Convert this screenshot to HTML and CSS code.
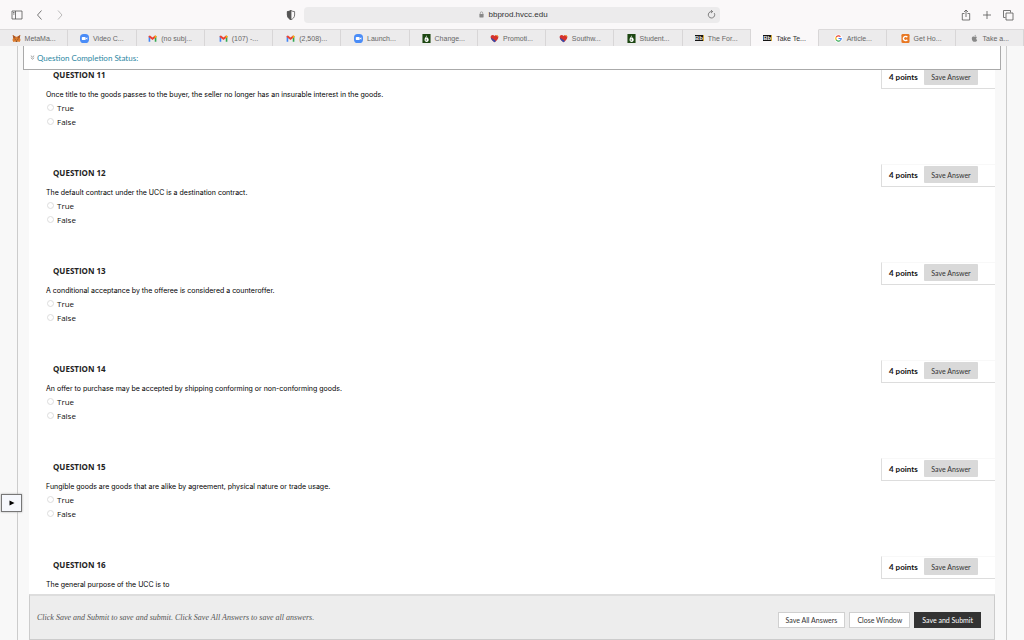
FILE: index.html
```html
<!DOCTYPE html>
<html lang="en">

<head>
    <meta charset="UTF-8">
    <title>Take Test</title>
    <link rel="stylesheet" href="styles.css">
</head>

<body>
    <svg class="sprite" aria-hidden="true">
        <symbol id="zoom" viewBox="0 0 10 10">
            <rect width="10" height="10" rx="4" fill="#4a8cf7"/>
            <rect x="2" y="3.2" width="4.3" height="3.6" rx="1" fill="#fff"/>
            <path d="M6.6 4.6 8.2 3.5v3L6.6 5.4z" fill="#fff"/>
        </symbol>
        <symbol id="gmail" viewBox="0 0 10 10">
            <path d="M.7 2.5v6h1.8V4z" fill="#4285f4"/>
            <path d="M9.3 2.5v6H7.5V4z" fill="#34a853"/>
            <path d="M.7 2.3 2.2 1.7 5 4l2.8-2.3 1.5.6v1L5 6.8.7 3.3z" fill="#ea4335"/>
            <path d="M7.5 2 8.6 1.7l.7.7v1L7.5 4.8z" fill="#fbbc04"/>
        </symbol>
        <symbol id="leaf" viewBox="0 0 10 10">
            <rect width="9" height="10" x=".5" fill="#1d4712"/>
            <path d="M5.3 1.2C5 3 2.8 4 2.8 6.4c0 1.5 1 2.4 2.4 2.4s2.3-1 2.3-2.3c0-1.3-.9-2-1.2-3L5 5z" fill="#fff"/>
            <path d="M4.7 5.6v2" stroke="#1d4712" stroke-width=".8"/>
        </symbol>
        <symbol id="heart" viewBox="0 0 10 10">
            <path d="M5 9.2C3 7.800.7 5.900.7 3.400.7 1.200 3.600.300 5 2.200 6.400.300 9.300 1.200 9.300 3.400 9.300 5.900 7 7.800 5 9.200z" fill="#d5322c"/>
            <path d="M6 1.500C7.300.700 9.300 1.500 9.300 3.400z" fill="#f3b13c"/>
            <path d="M.8 4C1.300 6.200 3.300 8 5 9.200L6.700 7.800z" fill="#304cb2"/>
        </symbol>
    </svg>

    <header class="browser">
        <div class="toolbar">
            <div class="tools">
                <button class="tool" aria-label="Sidebar"><svg viewBox="0 0 12 12"><path d="M1 2h10v8H1zM4.5 2v8M2 3.5h1.5M2 5h1.5"/></svg></button>
                <button class="tool" aria-label="Back"><svg viewBox="0 0 12 12"><path d="M7.500 1.500 3.500 6l4 4.500"/></svg></button>
                <button class="tool dim" aria-label="Forward"><svg viewBox="0 0 12 12"><path d="m4 1.500 4 4.500-4 4.500"/></svg></button>
                <button class="tool shield" aria-label="Privacy report"><svg viewBox="0 0 12 12"><path d="M6 1.500C4.800 2.300 3.500 2.600 2.400 2.600V6c0 2.400 1.600 3.800 3.600 4.700C8 9.800 9.600 8.400 9.600 6V2.600C8.500 2.600 7.200 2.300 6 1.500z"/><path class="solid" d="M6 1.500v9.200C4 9.800 2.400 8.400 2.400 6V2.600C3.500 2.600 4.800 2.300 6 1.500z"/></svg></button>
            </div>
            <div class="address">
                <svg class="lock" viewBox="0 0 6 8"><path d="M1.500 4V2.300a1.500 1.500 0 0 1 3 0V4" fill="none" stroke="#888" stroke-width=".8"/><rect x=".5" y="3.500" width="5" height="4" rx=".5" fill="#888"/></svg>
                <input class="url" type="text" aria-label="Address" value="bbprod.hvcc.edu">
                <button class="tool reload" aria-label="Reload"><svg viewBox="0 0 12 12"><path d="M9 4.500A3.500 3.500 0 1 1 6 2.800h1M5.500 1.200 7.200 2.800 5.500 4.400"/></svg></button>
            </div>
            <div class="tools right">
                <button class="tool" aria-label="Share"><svg viewBox="0 0 12 12"><path d="M4.500 4.500H2.300V11h7.400V4.500H7.500M6 8V1M4 3l2-2 2 2"/></svg></button>
                <button class="tool" aria-label="New tab"><svg viewBox="0 0 12 12"><path d="M6 2v8M2 6h8"/></svg></button>
                <button class="tool" aria-label="Tab overview"><svg viewBox="0 0 12 12"><path d="M4 4h7v7H4zM3.500 8.500H1.500v-7h7v2"/></svg></button>
            </div>
        </div>
        <nav class="tabs">
            <a class="tab" href="#"><svg viewBox="0 0 10 10"><path d="M.8 1 4 3h2l3.200-2-.5 3.200.8 2.500L8.500 9 6.500 8.300 5.700 9H4.300l-.8-.7L1.500 9 .5 6.700l.8-2.500z" fill="#dd7b2c"/><path d="m.8 1 3.200 2-.6 1.900-2.100-.7zM9.200 1 6 3l.6 1.900 2.100-.7z" fill="#a9582b"/><path d="m2.500 5.300 1.500.3-.2.800zM7.500 5.300 6 5.600l.2.800zM4.300 7.400h1.400v.9H4.300z" fill="#30333b"/></svg>MetaMa...</a>
            <a class="tab" href="#"><svg><use href="#zoom"/></svg>Video C...</a>
            <a class="tab" href="#"><svg><use href="#gmail"/></svg>(no subj...</a>
            <a class="tab" href="#"><svg><use href="#gmail"/></svg>(107) -...</a>
            <a class="tab" href="#"><svg><use href="#gmail"/></svg>(2,508)...</a>
            <a class="tab" href="#"><svg><use href="#zoom"/></svg>Launch...</a>
            <a class="tab" href="#"><svg><use href="#leaf"/></svg>Change...</a>
            <a class="tab" href="#"><svg><use href="#heart"/></svg>Promoti...</a>
            <a class="tab" href="#"><svg><use href="#heart"/></svg>Southw...</a>
            <a class="tab" href="#"><svg><use href="#leaf"/></svg>Student...</a>
            <a class="tab" href="#"><span class="bb">Bb</span>The For...</a>
            <a class="tab active" href="#"><span class="bb">Bb</span>Take Te...</a>
            <a class="tab" href="#"><svg viewBox="0 0 10 10"><circle cx="5" cy="5" r="4.500" fill="#fff"/><g fill="none" stroke-width="1.300"><path d="M7.200 3A3 3 0 0 0 2.400 3.600" stroke="#ea4335"/><path d="M2.400 3.500a3 3 0 0 0 0 3" stroke="#fbbc04"/><path d="M2.400 6.400A3 3 0 0 0 7 7.200" stroke="#34a853"/><path d="M7 7.200A3 3 0 0 0 8 5H5" stroke="#4285f4"/></g></svg>Article...</a>
            <a class="tab" href="#"><svg viewBox="0 0 10 10"><rect width="9" height="10" x=".5" rx="1.500" fill="#e87722"/><path d="M7 3.600A2.400 2.400 0 1 0 7 6.400" fill="none" stroke="#fff" stroke-width="1.500"/></svg>Get Ho...</a>
            <a class="tab" href="#"><svg viewBox="0 0 10 10"><path d="M5 3.200C4 2.500 2 2.700 2 5c0 2 1.300 3.700 2.200 3.700.4 0 .5-.2 1-.2s.7.200 1 .2C7 8.700 7.800 7.500 8 6.700 6.500 6 6.600 4.200 7.800 3.600 7 2.700 6 2.800 5 3.200zM5 2.600C5 1.600 5.700 1 6.500.900 6.500 1.800 5.900 2.600 5 2.600z" fill="#888"/></svg>Take a...</a>
        </nav>
    </header>

    <main class="page">
        <button class="expand" aria-label="Show course menu"><svg viewBox="0 0 6 6"><path d="M.5.5 5.500 3 .5 5.500z"/></svg></button>
        <div class="frame">
            <div class="status">
                <svg viewBox="0 0 6 6"><path d="M1 .8 3 2.500 5 .8M1 3.200 3 5l2-1.800"/></svg>
                <a href="#">Question Completion Status:</a>
            </div>
            <form class="questions" id="testForm">
                <section class="question">
                    <div class="body">
                        <h3>QUESTION 11</h3>
                        <p>Once title to the goods passes to the buyer, the seller no longer has an insurable interest in the goods.</p>
                        <label><input type="radio" name="q11">True</label>
                        <label><input type="radio" name="q11">False</label>
                    </div>
                    <div class="points"><b>4 points</b><button type="button">Save Answer</button></div>
                </section>
                <section class="question">
                    <div class="body">
                        <h3>QUESTION 12</h3>
                        <p>The default contract under the UCC is a destination contract.</p>
                        <label><input type="radio" name="q12">True</label>
                        <label><input type="radio" name="q12">False</label>
                    </div>
                    <div class="points"><b>4 points</b><button type="button">Save Answer</button></div>
                </section>
                <section class="question">
                    <div class="body">
                        <h3>QUESTION 13</h3>
                        <p>A conditional acceptance by the offeree is considered a counteroffer.</p>
                        <label><input type="radio" name="q13">True</label>
                        <label><input type="radio" name="q13">False</label>
                    </div>
                    <div class="points"><b>4 points</b><button type="button">Save Answer</button></div>
                </section>
                <section class="question">
                    <div class="body">
                        <h3>QUESTION 14</h3>
                        <p>An offer to purchase may be accepted by shipping conforming or non-conforming goods.</p>
                        <label><input type="radio" name="q14">True</label>
                        <label><input type="radio" name="q14">False</label>
                    </div>
                    <div class="points"><b>4 points</b><button type="button">Save Answer</button></div>
                </section>
                <section class="question">
                    <div class="body">
                        <h3>QUESTION 15</h3>
                        <p>Fungible goods are goods that are alike by agreement, physical nature or trade usage.</p>
                        <label><input type="radio" name="q15">True</label>
                        <label><input type="radio" name="q15">False</label>
                    </div>
                    <div class="points"><b>4 points</b><button type="button">Save Answer</button></div>
                </section>
                <section class="question">
                    <div class="body">
                        <h3>QUESTION 16</h3>
                        <p>The general purpose of the UCC is to</p>
                    </div>
                    <div class="points"><b>4 points</b><button type="button">Save Answer</button></div>
                </section>
            </form>
            <footer class="submit-bar">
                <p>Click Save and Submit to save and submit. Click Save All Answers to save all answers.</p>
                <button type="button">Save All Answers</button>
                <button type="button">Close Window</button>
                <button type="submit" form="testForm" class="primary">Save and Submit</button>
            </footer>
        </div>
    </main>
</body>

</html>
```
FILE: styles.css
```css
* {
    box-sizing: border-box;
}

body {
    margin: 0;
    height: 100vh;
    display: flex;
    flex-direction: column;
    overflow: hidden;
    font-family: "Open Sans", sans-serif;
    font-size: 8px;
    color: #111;
    background: #f8f8f8;
}

h3,
p {
    margin: 0;
}

button,
input {
    font-family: inherit;
    margin: 0;
}

a {
    text-decoration: none;
}

.sprite {
    position: absolute;
    width: 0;
    height: 0;
}

/* browser bar */
.browser {
    background: #faf8f9;
    font-family: "Liberation Sans", Arial, sans-serif;
}

.toolbar {
    display: grid;
    grid-template-columns: 1fr 41% 1fr;
    align-items: center;
    height: 29px;
}

.tools {
    display: flex;
    gap: 8px;
    padding: 0 5px 0 11px;
}

.tools.right {
    justify-content: flex-end;
    gap: 9px;
    padding-right: 10px;
}

.tool {
    width: 12px;
    height: 12px;
    padding: 0;
    border: none;
    background: none;
}

.tool svg {
    display: block;
    width: 12px;
    height: 12px;
    fill: none;
    stroke: #555;
    stroke-width: 0.8;
}

.tool:first-child:not(:only-child) {
    margin-right: 3px;
}

.right .tool:first-child:not(:only-child) {
    margin-right: 0;
}

.dim svg {
    stroke: #aaa;
}

.tool .solid {
    fill: #555;
}

.tools .shield {
    margin-left: auto;
}

.address {
    display: flex;
    align-items: center;
    height: 16px;
    margin: 0 2px;
    padding: 0 2px 0 20px;
    border-radius: 4px;
    background: #ecebec;
}

.lock {
    width: 5px;
    height: 7px;
    margin-left: auto;
    margin-right: 4px;
}

.url {
    width: 62px;
    padding: 0;
    border: none;
    background: none;
    font-size: 8px;
    color: #333;
}

.reload {
    margin-left: auto;
}

.reload svg {
    width: 11px;
    height: 11px;
}

.tabs {
    display: flex;
}

.tab {
    flex: 1;
    display: flex;
    align-items: center;
    justify-content: center;
    gap: 4px;
    height: 17px;
    border-top: 1px solid #dcdadb;
    border-right: 1px solid #d8d6d7;
    background: #ecebec;
    color: #666;
    font-size: 7px;
    white-space: nowrap;
}

.tab.active {
    background: #faf8f9;
    border-top-color: #faf8f9;
    color: #333;
}

.tab svg {
    width: 9px;
    height: 9px;
}

.bb {
    border-right: 1px solid #d0a83a;
    background: #151515;
    color: #eee;
    font-size: 6px;
    font-weight: bold;
    line-height: 6px;
}

/* test page */
.page {
    position: relative;
    flex: 1;
    min-height: 0;
    padding: 0 17px;
}

.frame {
    position: relative;
    height: 100%;
    display: flex;
    flex-direction: column;
    padding: 0 11px;
    border-left: 1px solid #ccc;
    border-right: 1px solid #ccc;
}

.status {
    position: absolute;
    top: 0;
    left: 5px;
    right: 5px;
    height: 24px;
    display: flex;
    align-items: center;
    gap: 2px;
    padding-left: 6px;
    border: 1px solid #aaa;
    border-top: none;
    background: #fff;
    font-family: Lato, sans-serif;
}

.status a {
    color: #2d87a3;
}

.status svg {
    width: 5px;
    height: 5px;
    fill: none;
    stroke: #888;
}

.questions {
    flex: 1;
    min-height: 0;
    overflow: hidden;
    padding-top: 20px;
    background: #fff;
}

.question {
    display: flex;
    justify-content: space-between;
    align-items: flex-start;
    padding-bottom: 36px;
}

.body {
    padding-left: 17px;
}

.body h3 {
    padding: 2px 0 0 7px;
    font-size: 8px;
    line-height: 14px;
    color: #222;
}

.body p {
    margin-top: 8px;
    font: 7px/10px Inter, Arial, sans-serif;
    color: #000;
}

.body label {
    display: flex;
    align-items: center;
    gap: 3px;
    height: 14px;
}

.body input {
    appearance: none;
    width: 7px;
    height: 7px;
    margin-left: 1px;
    border: 1px solid #ddd;
    border-radius: 50%;
}

.points {
    display: flex;
    align-items: center;
    justify-content: space-between;
    width: 114px;
    height: 23px;
    padding: 0 17px 2px 7px;
    border: 1px solid #ddd;
    border-top-color: #f8f8f8;
    border-right: none;
    font-family: Lato, sans-serif;
}

.points button {
    width: 54px;
    height: 17px;
    padding: 0;
    border: none;
    border-radius: 1px;
    background: #d9d9d9;
    color: #333;
    font-size: 7px;
}

.submit-bar {
    display: flex;
    align-items: center;
    gap: 4px;
    height: 46px;
    padding: 5px 13px 0 7px;
    border: 1px solid #ccc;
    border-top: 2px solid #ddd;
    background: #ededed;
    font-family: Lato, sans-serif;
}

.submit-bar p {
    flex: 1;
    padding-bottom: 6px;
    font: italic 8px "Liberation Serif", serif;
    color: #555;
}

.submit-bar button {
    height: 16px;
    padding: 0 7px;
    border: 1px solid #d0d0d0;
    background: #fff;
    color: #333;
    font-size: 7px;
}

.submit-bar .primary {
    border-color: #333;
    background: #333;
    color: #fff;
}

.expand {
    position: absolute;
    left: 1px;
    bottom: 128px;
    z-index: 1;
    width: 21px;
    height: 18px;
    padding: 0;
    border: 1px solid #777;
    background: #f6f8fd;
    box-shadow: 0 0 2px #aaa;
}

.expand svg {
    display: block;
    width: 6px;
    height: 6px;
    margin: 0 auto;
}
```
